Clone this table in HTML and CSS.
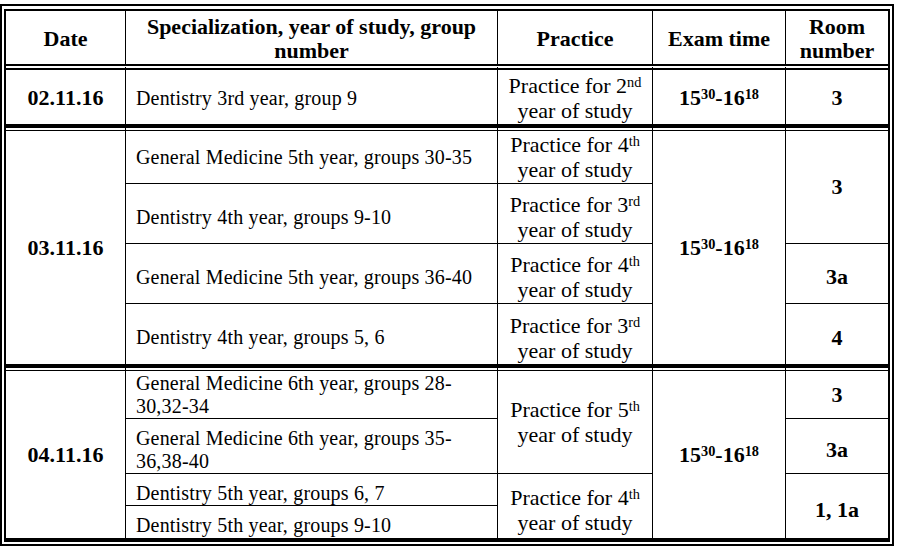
FILE: index.html
```html
<!DOCTYPE html>
<html lang="en">
<head>
<meta charset="utf-8">
<title>Exam schedule</title>
<link rel="stylesheet" href="styles.css">
</head>
<body>
<div class="frame">
<table class="schedule">
<colgroup>
<col class="c-date"><col class="c-spec"><col class="c-prac"><col class="c-time"><col class="c-room">
</colgroup>
<thead>
<tr class="r-head">
<th class="first">Date</th>
<th>Specialization, year of study, group number</th>
<th>Practice</th>
<th>Exam time</th>
<th class="room-h">Room number</th>
</tr>
</thead>
<tbody>
<tr class="r-g1 dbl">
<td class="date first">02.11.16</td>
<td class="spec">Dentistry 3rd year, group 9</td>
<td class="prac">Practice for 2<sup>nd</sup> year of study</td>
<td class="time">15<sup>30</sup>-16<sup>18</sup></td>
<td class="room">3</td>
</tr>
<tr class="r-g2a sep">
<td class="date first" rowspan="4">03.11.16</td>
<td class="spec">General Medicine 5th year, groups 30-35</td>
<td class="prac">Practice for 4<sup>th</sup> year of study</td>
<td class="time" rowspan="4">15<sup>30</sup>-16<sup>18</sup></td>
<td class="room" rowspan="2">3</td>
</tr>
<tr class="r-g2b lo">
<td class="spec">Dentistry 4th year, groups 9-10</td>
<td class="prac">Practice for 3<sup>rd</sup> year of study</td>
</tr>
<tr class="r-g2c lo">
<td class="spec">General Medicine 5th year, groups 36-40</td>
<td class="prac">Practice for 4<sup>th</sup> year of study</td>
<td class="room">3a</td>
</tr>
<tr class="r-g2d lo">
<td class="spec">Dentistry 4th year, groups 5, 6</td>
<td class="prac">Practice for 3<sup>rd</sup> year of study</td>
<td class="room">4</td>
</tr>
<tr class="r-g3a sep">
<td class="date first" rowspan="4">04.11.16</td>
<td class="spec">General Medicine 6th year, groups 28-<br>30,32-34</td>
<td class="prac" rowspan="2">Practice for 5<sup>th</sup> year of study</td>
<td class="time" rowspan="4">15<sup>30</sup>-16<sup>18</sup></td>
<td class="room">3</td>
</tr>
<tr class="r-g3b lo">
<td class="spec">General Medicine 6th year, groups 35-<br>36,38-40</td>
<td class="room">3a</td>
</tr>
<tr class="r-g3c lo">
<td class="spec">Dentistry 5th year, groups 6, 7</td>
<td class="prac" rowspan="2">Practice for 4<sup>th</sup> year of study</td>
<td class="room" rowspan="2">1, 1a</td>
</tr>
<tr class="r-g3d lo">
<td class="spec">Dentistry 5th year, groups 9-10</td>
</tr>
</tbody>
</table>
</div>
</body>
</html>
```

FILE: styles.css
```css
html, body {
  margin: 0;
  padding: 0;
  background: #fff;
}

body {
  font-family: "Liberation Serif", "Times New Roman", serif;
  color: #000;
}

.frame {
  width: fit-content;
  margin-top: 4px;
  border: 2px solid #000;
  padding: 3px 2px 2px 2px;
}

.schedule {
  border-collapse: separate;
  border-spacing: 0;
  table-layout: fixed;
  width: 886px;
  border-style: solid;
  border-color: #000;
  border-width: 2px 2px 4px 2px;
}

.c-date { width: 119px; }
.c-spec { width: 372px; }
.c-prac { width: 155px; }
.c-time { width: 133px; }
.c-room { width: 103px; }

th, td {
  border-left: 1px solid #000;
  border-top: 1px solid #000;
  padding: 2px 3px 0 3px;
  vertical-align: middle;
  text-align: center;
}

th {
  border-top: 0;
  font-weight: bold;
  font-size: 22px;
  line-height: 24px;
}

.first { border-left: 0; }

.r-head { height: 53px; }
.r-g1 { height: 60px; }
.r-g2a { height: 59px; }
.r-g2b { height: 60px; }
.r-g2c { height: 60px; }
.r-g2d { height: 61px; }
.r-g3a { height: 54px; }
.r-g3b { height: 55px; }
.r-g3c { height: 32px; }
.r-g3d { height: 33px; }

.dbl > td { border-top: 6px double #000; }

.sep > td {
  border-top: 4px solid #000;
  padding-top: 3px;
  background-image: linear-gradient(to bottom, #fff 0, #fff 2px, #000 2px, #000 3px, transparent 3px);
  background-repeat: no-repeat;
}

.lo > td { padding-top: 7px; }

.date, .time, .room {
  font-weight: bold;
  font-size: 22px;
  line-height: 24px;
}

.spec {
  text-align: left;
  padding-left: 10px;
  font-size: 20px;
  line-height: 23px;
  letter-spacing: 0.18px;
}

.prac {
  font-size: 22px;
  line-height: 25px;
}

sup {
  font-size: 0.65em;
  line-height: 0;
  vertical-align: 0.45em;
}
```
